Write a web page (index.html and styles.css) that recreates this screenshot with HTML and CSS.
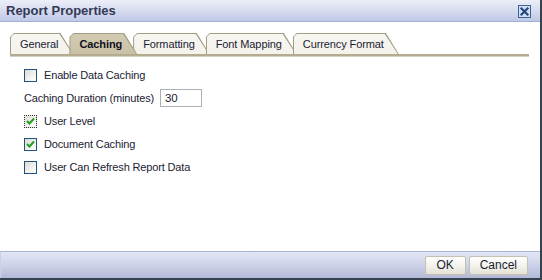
FILE: index.html
```html
<!DOCTYPE html>
<html lang="en">
<head>
    <meta charset="UTF-8">
    <title>Report Properties</title>
    <link rel="stylesheet" href="styles.css">
</head>
<body>

<div class="dialog">
    <!-- Barra de título -->
    <header class="titlebar">
        <h1>Report Properties</h1>
        <button class="close-btn" title="Close">
            <svg width="13" height="13" viewBox="0 0 13 13">
                <rect x="0.5" y="0.5" width="12" height="12" fill="#d3def2" stroke="#3d6196"/>
                <path d="M3.5 3.5 L9.5 9.5 M9.5 3.5 L3.5 9.5" stroke="#23487e" stroke-width="2.2" stroke-linecap="square"/>
            </svg>
        </button>
    </header>

    <div class="dialog-body">
        <nav class="tabs">
            <div class="tab"><span>General</span></div>
            <div class="tab active"><span>Caching</span></div>
            <div class="tab"><span>Formatting</span></div>
            <div class="tab"><span>Font Mapping</span></div>
            <div class="tab"><span>Currency Format</span></div>
        </nav>
        <div class="tab-strip"></div>

        <div class="form">
            <label class="check-row">
                <span class="checkbox"></span>
                Enable Data Caching
            </label>
            <div class="field-row">
                <span>Caching Duration (minutes)</span>
                <span class="text-input">30</span>
            </div>
            <label class="check-row">
                <span class="checkbox checked focused">
                    <svg width="9" height="8" viewBox="0 0 9 8"><path d="M1 4 L3.5 6.5 L8 1.5" fill="none" stroke="#21a121" stroke-width="2"/></svg>
                </span>
                User Level
            </label>
            <label class="check-row">
                <span class="checkbox checked">
                    <svg width="9" height="8" viewBox="0 0 9 8"><path d="M1 4 L3.5 6.5 L8 1.5" fill="none" stroke="#21a121" stroke-width="2"/></svg>
                </span>
                Document Caching
            </label>
            <label class="check-row">
                <span class="checkbox"></span>
                User Can Refresh Report Data
            </label>
        </div>
    </div>

    <footer class="footer">
        <button class="btn ok-btn">OK</button>
        <button class="btn">Cancel</button>
    </footer>
</div>

</body>
</html>
```

FILE: styles.css
```css
:root {
    --text-color: #1b1b33;
    --tab-border: #a39c84;
    --tab-fill: #f3f2eb;
    --tab-active: #c9c1a5;
    --strip-color: #b4ab90;
}

* { margin: 0; padding: 0; box-sizing: border-box; }
body {
    width: 542px;
    height: 280px;
    font-family: "Liberation Sans", Arial, sans-serif;
    font-size: 11px;
    letter-spacing: -0.15px;
    color: var(--text-color);
    background: #ffffff;
}

.dialog {
    width: 542px;
    height: 280px;
    display: flex;
    flex-direction: column;
    border-right: 2px solid #34434e;
    border-bottom: 2px solid #34434e;
}

/* Barra de título */
.titlebar {
    height: 22px;
    display: flex;
    align-items: center;
    justify-content: space-between;
    padding: 0 9px 0 6px;
    background: linear-gradient(#eceff8, #dbe0f1 40%, #bfc8e5);
    border-bottom: 1px solid #9eb0d3;
}
.titlebar h1 {
    font-size: 13px;
    font-weight: bold;
    letter-spacing: 0;
    color: #343a55;
}
.close-btn {
    background: none;
    border: none;
    display: flex;
    margin-top: 1px;
}

/* Abas */
.dialog-body {
    flex: 1;
    padding: 11px 11px 0 10px;
}
.tabs {
    display: flex;
    height: 21px;
}
.tab {
    position: relative;
    height: 21px;
    margin-right: -4px;
    padding: 0 15px 0 10px;
    display: flex;
    align-items: center;
    background: var(--tab-border);
    clip-path: polygon(0 4px, 4px 0, calc(100% - 13px) 0, 100% 100%, 0 100%);
}
.tab::before {
    content: '';
    position: absolute;
    top: 1px; left: 1px; right: 1px; bottom: 0;
    background: linear-gradient(#f7f6f1, var(--tab-fill));
    clip-path: polygon(0 3px, 3px 0, calc(100% - 13px) 0, 100% 100%, 0 100%);
}
.tab span { position: relative; font-size: 11px; letter-spacing: -0.1px; }
.tab.active { z-index: 2; }
.tab.active::before { background: linear-gradient(#d3ccb3, var(--tab-active)); }
.tab.active span { font-weight: bold; color: #111122; }

.tab-strip {
    height: 3px;
    background: var(--strip-color);
    border-bottom: 1px solid #d6d1c0;
}

/* Formulário */
.form {
    padding: 9px 0 0 14px;
    display: flex;
    flex-direction: column;
    gap: 5px;
}
.check-row,
.field-row {
    display: flex;
    align-items: center;
    gap: 7px;
    height: 18px;
}
.field-row { gap: 6px; }
.checkbox {
    width: 13px;
    height: 13px;
    border: 1px solid #1d5283;
    background: linear-gradient(135deg, #dcdcd6, #f6f6f3 70%, #ffffff);
    display: flex;
    align-items: center;
    justify-content: center;
}
.checkbox.focused { border: 1px dotted #333; }

.text-input {
    width: 42px;
    height: 18px;
    border: 1px solid #a9b0b8;
    padding: 1px 4px;
    line-height: 14px;
    font-size: 11.5px;
}

/* Rodapé */
.footer {
    height: 27px;
    display: flex;
    justify-content: flex-end;
    align-items: center;
    gap: 3px;
    padding: 0 12px 0 0;
    border-top: 1px solid #a5b3d2;
    border-left: 1px solid #c7d2ea;
    background: linear-gradient(#e1e6f6, #c9cee6 60%, #b3b8d6);
}
.btn {
    height: 19px;
    min-width: 41px;
    padding: 0 10px;
    font-family: "Liberation Sans", Arial, sans-serif;
    font-size: 12px;
    color: #1b1b33;
    border: 1px solid #c3c1b0;
    border-radius: 2px;
    background: linear-gradient(#ffffff, #f1f0e8 60%, #e3e1d4);
}
.ok-btn { width: 41px; }
```
